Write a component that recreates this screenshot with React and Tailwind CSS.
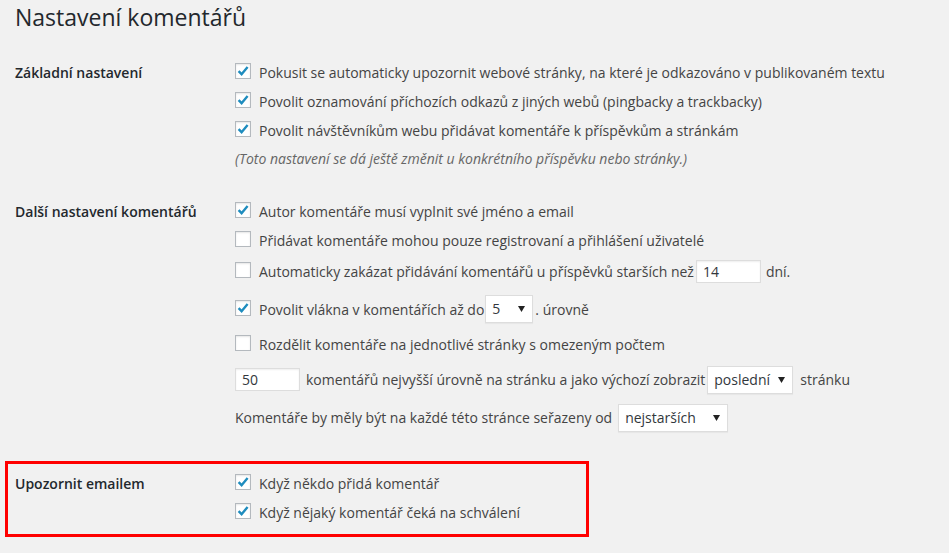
import React from "react";

function Check({ checked }) {
  return (
    <span className="w-4 h-4 mr-2 mb-[3px] flex-none border border-[#b4b9be] bg-white shadow-[inset_0_1px_2px_rgba(0,0,0,0.1)] flex items-center justify-center">
      {checked && (
        <svg width="14" height="14" viewBox="0 0 14 14">
          <path d="M2.6 7.2 L5.6 10.2 L11.6 3" fill="none" stroke="#1e8cbe" strokeWidth="2.4" strokeLinecap="butt" strokeLinejoin="miter" />
        </svg>
      )}
    </span>
  );
}

function Row({ checked, children, h = "h-[29px]" }) {
  return (
    <div className={`flex items-center ${h}`}>
      <Check checked={checked} />
      <span className="leading-[29px] whitespace-nowrap">{children}</span>
    </div>
  );
}

function TextInput({ value, w }) {
  return (
    <span className={`${w} h-[23px] flex-none border border-[#ddd] bg-white shadow-[inset_0_1px_2px_rgba(0,0,0,0.07)] flex items-center pl-[6px] text-[#32373c] leading-[21px]`}>
      {value}
    </span>
  );
}

function Select({ value, w }) {
  return (
    <span className={`${w} h-[28px] flex-none border border-[#ddd] bg-white shadow-[0_1px_1px_rgba(0,0,0,0.04)] flex items-center justify-between pl-[6px] pr-[7px] text-[#32373c] leading-[26px]`}>
      <span>{value}</span>
      <svg width="7" height="6" viewBox="0 0 7 6">
        <path d="M0 0 L7 0 L3.5 6 Z" fill="#222" />
      </svg>
    </span>
  );
}

export default function App() {
  return (
    <div className="min-h-screen bg-[#f1f1f1] font-['Open_Sans',sans-serif] text-[14px] text-[#444] pl-[15px]">
      <h1 className="text-[23px] leading-[29px] pt-[3px] text-[#23282d] font-normal">Nastavení komentářů</h1>

      <section className="flex mt-[26px]">
        <div className="w-[220px] flex-none leading-[29px] font-semibold text-[#23282d]">Základní nastavení</div>
        <div className="flex flex-col">
          <Row checked>Pokusit se automaticky upozornit webové stránky, na které je odkazováno v publikovaném textu</Row>
          <Row checked>Povolit oznamování příchozích odkazů z jiných webů (pingbacky a trackbacky)</Row>
          <Row checked>Povolit návštěvníkům webu přidávat komentáře k příspěvkům a stránkám</Row>
          <div className="h-[29px] leading-[28px] italic text-[14px] text-[#666] whitespace-nowrap">
            (Toto nastavení se dá ještě změnit u konkrétního příspěvku nebo stránky.)
          </div>
        </div>
      </section>

      <section className="flex mt-[23px]">
        <div className="w-[220px] flex-none leading-[29px] font-semibold text-[#23282d]">Další nastavení komentářů</div>
        <div className="flex flex-col">
          <Row checked>Autor komentáře musí vyplnit své jméno a email</Row>
          <Row>Přidávat komentáře mohou pouze registrovaní a přihlášení uživatelé</Row>
          <div className="flex items-center h-[33px]">
            <Check />
            <span className="leading-[29px] whitespace-nowrap">Automaticky zakázat přidávání komentářů u příspěvků starších než</span>
            <span className="ml-[2px]"><TextInput value="14" w="w-[65px]" /></span>
            <span className="ml-[5px] leading-[29px]">dní.</span>
          </div>
          <div className="flex items-center h-[42px]">
            <Check checked />
            <span className="leading-[29px] whitespace-nowrap">Povolit vlákna v komentářích až do</span>
            <span className="ml-[1px]"><Select value="5" w="w-[48px]" /></span>
            <span className="ml-[2px] leading-[29px]">. úrovně</span>
          </div>
          <Row>Rozdělit komentáře na jednotlivé stránky s omezeným počtem</Row>
          <div className="flex items-center h-[41px]">
            <TextInput value="50" w="w-[65px]" />
            <span className="ml-[6px] leading-[29px] whitespace-nowrap">komentářů nejvyšší úrovně na stránku a jako výchozí zobrazit</span>
            <span className="ml-[2px]"><Select value="poslední" w="w-[86px]" /></span>
            <span className="ml-[7px] leading-[29px]">stránku</span>
          </div>
          <div className="flex items-center h-[35px]">
            <span className="leading-[29px] whitespace-nowrap">Komentáře by měly být na každé této stránce seřazeny od</span>
            <span className="ml-[6px]"><Select value="nejstarších" w="w-[110px]" /></span>
          </div>
        </div>
      </section>

      <section className="flex ml-[-10px] mt-[26px] w-[584px] border-[3px] border-[#ff0000] pl-[7px] pt-[5px] pb-[7px]">
        <div className="w-[220px] flex-none leading-[29px] font-semibold text-[#23282d]">Upozornit emailem</div>
        <div className="flex flex-col">
          <Row checked>Když někdo přidá komentář</Row>
          <Row checked>Když nějaký komentář čeká na schválení</Row>
        </div>
      </section>
    </div>
  );
}
